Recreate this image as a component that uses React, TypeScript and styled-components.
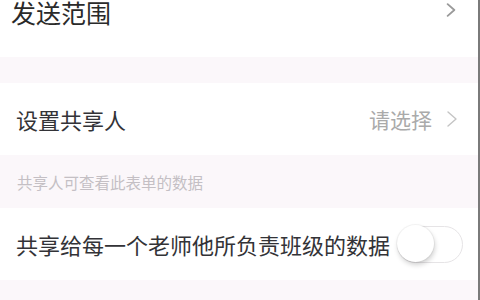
import React, { useState } from "react";
import styled, { createGlobalStyle } from "styled-components";

const Global = createGlobalStyle`
  html, body { margin: 0; padding: 0; background: #fbf7fa; }
  body { font-family: "Noto Sans CJK SC", "Noto Sans", sans-serif; }
`;

const Page = styled.div`
  width: 480px;
  height: 300px;
  box-sizing: border-box;
  overflow: hidden;
  background: #fbf7fa;
  border-right: 2px solid #7a7a7a;
  display: flex;
  flex-direction: column;
`;

const Cell = styled.div<{ $h: number }>`
  height: ${(p) => p.$h}px;
  flex: none;
  background: #ffffff;
  display: flex;
  align-items: center;
  justify-content: space-between;
  padding: 0 15px 0 16px;
`;

const TopCell = styled(Cell)`
  align-items: flex-start;
  padding-left: 11px;
  padding-right: 22px;
`;

const Title = styled.span<{ $size?: number; $color?: string }>`
  font-size: ${(p) => p.$size ?? 22}px;
  line-height: 1;
  color: ${(p) => p.$color ?? "#333337"};
  white-space: nowrap;
`;

const TopTitle = styled(Title)`
  margin-top: 0;
`;

const Spacer = styled.div<{ $h: number }>`
  height: ${(p) => p.$h}px;
  flex: none;
`;

const Hint = styled.div`
  height: 53px;
  flex: none;
  display: flex;
  align-items: center;
  padding-left: 17px;
  font-size: 15.5px;
  color: #c4bfc4;
`;

const Right = styled.div`
  display: flex;
  align-items: center;
  gap: 14px;
  padding-right: 5px;
`;

const Placeholder = styled.span`
  font-size: 21px;
  line-height: 1;
  color: #aaaaaa;
`;

const ChevronBox = styled.div`
  display: flex;
  margin-top: 3px;
`;

const Track = styled.button<{ $on: boolean }>`
  width: 66px;
  height: 37px;
  box-sizing: border-box;
  border-radius: 19px;
  border: 1.5px solid #e6e4e6;
  background: ${(p) => (p.$on ? "#4cd964" : "#ffffff")};
  padding: 0;
  position: relative;
  cursor: pointer;
  flex: none;
`;

const Knob = styled.span<{ $on: boolean }>`
  position: absolute;
  top: -1.5px;
  left: ${(p) => (p.$on ? "28px" : "-1.5px")};
  width: 37px;
  height: 37px;
  border-radius: 50%;
  background: #ffffff;
  box-shadow: 1px 3px 5px rgba(0, 0, 0, 0.18), 0 0 0 1px rgba(0, 0, 0, 0.04);
`;

const Chevron = ({ color, w, h, sw }: { color: string; w: number; h: number; sw: number }) => (
  <svg width={w} height={h} viewBox="0 0 12 16" fill="none">
    <polyline points="2,1 10,8 2,15" stroke={color} strokeWidth={sw} strokeLinecap="round" strokeLinejoin="round" />
  </svg>
);

export default function App() {
  const [on, setOn] = useState(false);
  return (
    <>
      <Global />
      <Page>
        <TopCell $h={57}>
          <TopTitle $size={25} $color="#2a2a2a">发送范围</TopTitle>
          <ChevronBox>
            <Chevron color="#9a9a9a" w={10} h={14} sw={2.2} />
          </ChevronBox>
        </TopCell>
        <Spacer $h={26} />
        <Cell $h={72}>
          <Title>设置共享人</Title>
          <Right>
            <Placeholder>请选择</Placeholder>
            <Chevron color="#c4c4c4" w={12} h={16} sw={1.4} />
          </Right>
        </Cell>
        <Hint>共享人可查看此表单的数据</Hint>
        <Cell $h={72}>
          <Title>共享给每一个老师他所负责班级的数据</Title>
          <Track $on={on} onClick={() => setOn(!on)} aria-label="toggle">
            <Knob $on={on} />
          </Track>
        </Cell>
      </Page>
    </>
  );
}
